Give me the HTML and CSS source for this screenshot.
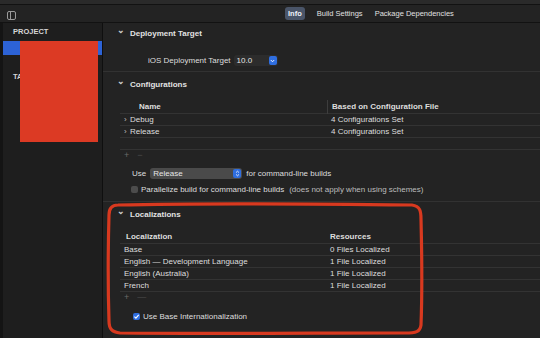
FILE: index.html
```html
<!DOCTYPE html>
<html>
<head>
<meta charset="utf-8">
<link rel="stylesheet" href="styles.css">
</head>
<body>
<div class="window">
  <div class="topstrip"></div>
  <div class="toolbar">
    <div class="toggle"><svg width="9" height="9" viewBox="0 0 9 9"><rect x="0.5" y="0.5" width="8" height="8" rx="1.5" fill="none" stroke="#9a9a9a" stroke-width="1"/><line x1="3.5" y1="1" x2="3.5" y2="8" stroke="#9a9a9a" stroke-width="1"/></svg></div>
    <div class="tabs">
      <span class="tab active">Info</span>
      <span class="tab mid">Build Settings</span>
      <span class="tab">Package Dependencies</span>
    </div>
  </div>
  <div class="body">
    <aside class="sidebar">
      <div class="side-title">PROJECT</div>
      <div class="side-row selected"></div>
      <div class="side-title targets">TA</div>
      <div class="redact"></div>
    </aside>
    <main class="main">
      <section class="section">
        <div class="sec-head"><span class="chev">&#8964;</span>Deployment Target</div>
        <div class="deploy">
          <span class="lbl">iOS Deployment Target</span>
          <span class="popup small"><span class="pv">10.0</span><span class="pbtn"><svg width="5" height="4" viewBox="0 0 5 4"><path d="M0.8 1 L2.5 2.8 L4.2 1" fill="none" stroke="#fff" stroke-width="0.9"/></svg></span></span>
        </div>
      </section>
      <section class="section">
        <div class="sec-head"><span class="chev">&#8964;</span>Configurations</div>
        <div class="table cfg">
          <div class="trow thead"><span class="c1">Name</span><span class="c2 divl">Based on Configuration File</span></div>
          <div class="trow"><span class="c1 exp"><span class="arr">&#8250;</span>Debug</span><span class="c2">4 Configurations Set</span></div>
          <div class="trow"><span class="c1 exp"><span class="arr">&#8250;</span>Release</span><span class="c2">4 Configurations Set</span></div>
          <div class="trow empty"></div>
        </div>
        <div class="plusminus"><span>+</span><span class="minus">−</span></div>
        <div class="userow">
          <span class="lbl">Use</span>
          <span class="popup wide"><span class="pv">Release</span><span class="pbtn"><svg width="5" height="7" viewBox="0 0 5 7"><path d="M1 2.6 L2.5 1.2 L4 2.6 M1 4.4 L2.5 5.8 L4 4.4" fill="none" stroke="#fff" stroke-width="0.8"/></svg></span></span>
          <span class="lbl">for command-line builds</span>
        </div>
        <div class="checkrow cfgcheck">
          <span class="box"></span>
          <span class="lbl">Parallelize build for command-line builds</span>
          <span class="note">(does not apply when using schemes)</span>
        </div>
      </section>
      <section class="section last">
        <div class="sec-head"><span class="chev">&#8964;</span>Localizations</div>
        <div class="table loc">
          <div class="trow thead"><span class="c1">Localization</span><span class="c2">Resources</span></div>
          <div class="trow"><span class="c1">Base</span><span class="c2">0 Files Localized</span></div>
          <div class="trow"><span class="c1">English — Development Language</span><span class="c2">1 File Localized</span></div>
          <div class="trow"><span class="c1">English (Australia)</span><span class="c2">1 File Localized</span></div>
          <div class="trow"><span class="c1">French</span><span class="c2">1 File Localized</span></div>
        </div>
        <div class="plusminus loc-pm"><span>+</span><span class="minus">—</span></div>
        <div class="checkrow loccheck">
          <span class="box checked"><svg width="7" height="7" viewBox="0 0 7 7"><path d="M1.4 3.6 L2.9 5.1 L5.7 1.8" fill="none" stroke="#fff" stroke-width="1.1"/></svg></span>
          <span class="lbl">Use Base Internationalization</span>
        </div>
      </section>
    </main>
  </div>
  <svg class="marker" width="540" height="338" viewBox="0 0 540 338">
    <path d="M118 205 C 200 203, 330 204, 412 205 C 420 206, 421 211, 421 219 C 422 260, 422 300, 421 325 C 420 332, 416 333, 405 333 C 320 333, 200 334, 120 333 C 112 332, 109 329, 109 321 C 108 290, 108 250, 109 215 C 109 208, 112 205, 118 205 Z" fill="none" stroke="#d8391f" stroke-width="3.2" stroke-linejoin="round"/>
  </svg>
</div>
</body>
</html>
```

FILE: styles.css
```css
* { box-sizing: border-box; }
html, body { margin: 0; padding: 0; }
body {
  width: 540px;
  height: 338px;
  overflow: hidden;
  background: #1e1e1e;
  font-family: "Liberation Sans", Arial, sans-serif;
  font-size: 8px;
  color: #dedede;
}
.window { position: relative; width: 540px; height: 338px; display: flex; flex-direction: column; }
.topstrip { height: 5px; background: #2a2a2a; border-bottom: 1px solid #121212; }
.toolbar {
  height: 18px;
  display: flex;
  align-items: center;
  background: #232323;
  border-bottom: 1px solid #121212;
}
.toggle { width: 102px; padding-left: 7px; display: flex; align-items: center; height: 100%; padding-top: 4px; }
.tabs { display: flex; align-items: center; margin-left: 183px; }
.tab { font-size: 7.5px; color: #e0e0e0; padding: 2px 3px; margin-right: 9px; }
.tab.mid { margin-right: 6px; }
.tab.active { background: #4a5569; color: #eef2fa; border-radius: 3px; font-weight: bold; }
.body { flex: 1; display: flex; min-height: 0; }
.sidebar {
  position: relative;
  width: 103px;
  background: #1e1e1e;
  border-left: 3px solid #141414;
  border-right: 1px solid #0f0f0f;
}
.side-title { font-weight: bold; font-size: 7.5px; color: #d6d6d6; padding: 4px 0 0 10px; height: 18px; }
.side-title.targets { height: auto; padding-top: 17px; }
.side-row.selected { height: 14px; background: #2d63d6; }
.redact { position: absolute; left: 17px; top: 18px; width: 78px; height: 101px; background: #dc3a24; }
.main { flex: 1; background: #232323; display: flex; flex-direction: column; }
.section { border-bottom: 1px solid #323232; }
.section.last { border-bottom: none; }
.sec-head {
  height: 21px;
  display: flex;
  align-items: center;
  padding-left: 14px;
  font-weight: bold;
  font-size: 8px;
  color: #e2e2e2;
}
.section + .section .sec-head { height: 25px; }
.chev { display: inline-block; width: 13px; font-size: 9px; line-height: 1; position: relative; top: -3px; color: #cfcfcf; }
.deploy { height: 27px; display: flex; align-items: flex-start; padding: 11px 0 0 45px; }
.deploy .lbl { margin-right: 3px; line-height: 11px; }
.popup { display: inline-flex; align-items: center; justify-content: space-between; height: 11px; border-radius: 3px; padding-left: 3px; }
.popup.small { width: 44px; background: #2c2c2c; }
.popup.wide { width: 92px; background: #4a4a4a; margin: 0 4px 0 4px; }
.pv { line-height: 11px; color: #e6e6e6; }
.pbtn { width: 8px; height: 9px; margin-right: 1px; background: #2f6ee0; border-radius: 2px; display: flex; align-items: center; justify-content: center; }
.table { margin-left: 17px; margin-top: 3px; }
.trow { display: flex; height: 12px; align-items: center; border-bottom: 1px solid #333; }
.trow.thead { height: 14px; font-weight: bold; }
.trow.empty { height: 12px; }
.cfg .c1 { width: 207px; padding-left: 19px; }
.cfg .exp { padding-left: 4px; }
.arr { display: inline-block; width: 6px; font-size: 8px; color: #bdbdbd; }
.cfg .c2 { padding-left: 4px; }
.cfg .thead .c2 { border-left: 1px solid #3d3d3d; height: 14px; line-height: 14px; }
.loc .c1 { width: 210px; padding-left: 4px; }
.loc .thead .c1 { padding-left: 6px; }
.loc .c2 { padding-left: 0; }
.plusminus { display: flex; height: 10px; align-items: center; padding-left: 21px; color: #6a6a6a; font-size: 9px; }
.plusminus .minus { margin-left: 8px; color: #4e4e4e; }
.loc-pm { padding-left: 21px; }
.userow { display: flex; align-items: center; height: 14px; margin-top: 6px; padding-left: 29px; }
.checkrow { display: flex; align-items: center; height: 12px; }
.cfgcheck { margin-top: 3px; height: 12px; margin-bottom: 6px; padding-left: 28px; }
.box { width: 7px; height: 7px; border-radius: 2px; background: #4c4c4c; margin-right: 3px; display: flex; align-items: center; justify-content: center; }
.box.checked { background: #2f6ee0; }
.note { margin-left: 5px; color: #bdbdbd; }
.loccheck { margin-top: 8px; padding-left: 30px; }
.marker { position: absolute; left: 0; top: 0; pointer-events: none; }
```
